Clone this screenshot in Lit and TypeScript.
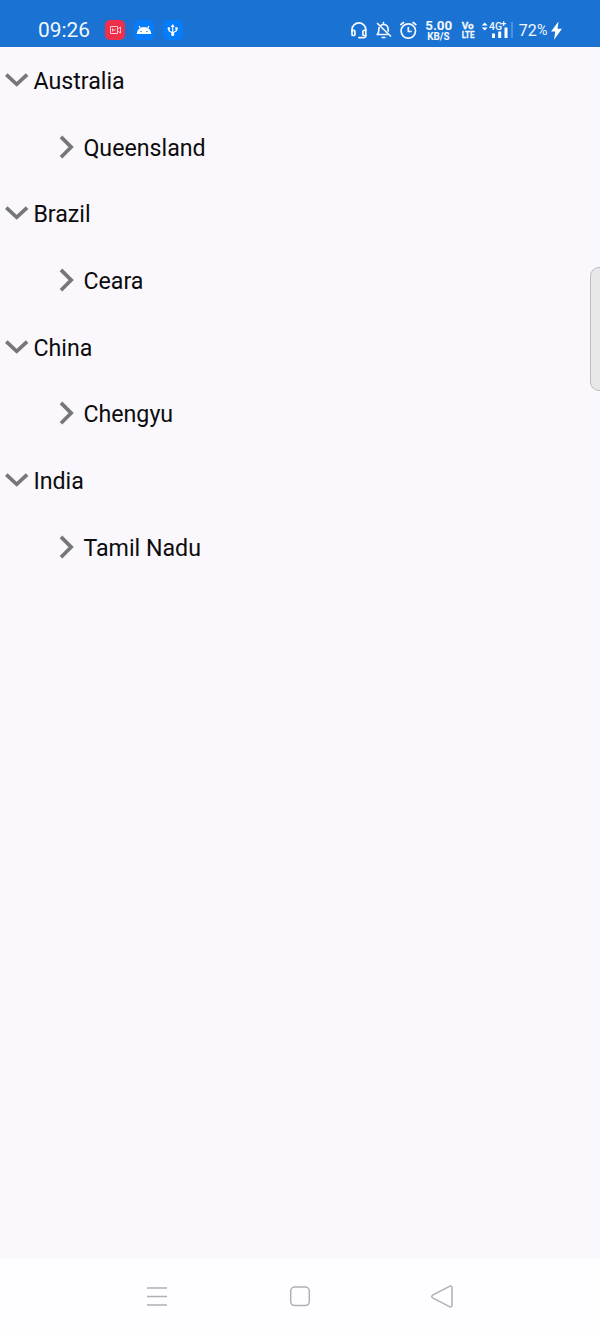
import { LitElement, html, css, svg } from "lit";
import { customElement, property } from "lit/decorators.js";

const countries = [
  { name: "Australia", region: "Queensland" },
  { name: "Brazil", region: "Ceara" },
  { name: "China", region: "Chengyu" },
  { name: "India", region: "Tamil Nadu" },
];

@customElement("status-bar")
class StatusBar extends LitElement {
  static styles = css`
    :host {
      display: flex;
      flex: none;
      justify-content: space-between;
      height: 46.5px;
      background: #1a73d3;
      font-family: Roboto, sans-serif;
    }
    svg { display: block; height: 46px; flex: none; }
    .group { display: flex; }
    .line { fill: none; stroke: #f4f8fd; stroke-width: 1.7; stroke-linecap: round; stroke-linejoin: round; }
    .thin { fill: none; stroke: #fff; stroke-width: 1.2; }
    .faint { fill: none; stroke: #ffc9d0; stroke-width: 1; }
    .fill { fill: #fff; }
    .clock { font-size: 20.6px; fill: #f4f8fd; }
    .speed { font-size: 13px; font-weight: 700; fill: #f4f8fd; }
    .unit { font-size: 10.2px; font-weight: 700; fill: #f4f8fd; }
    .volte { font-size: 9.8px; font-weight: 700; fill: #f4f8fd; stroke: #f4f8fd; stroke-width: 0.3; }
    .net { font-size: 11.6px; font-weight: 500; fill: #f4f8fd; }
    .pct { font-size: 16px; fill: #f4f8fd; }
    .sign { font-size: 14px; fill: #f4f8fd; }
    .red { fill: #f0304a; }
    .blue { fill: #057dfb; }
    .divider { fill: #4b92df; }
  `;

  render() {
    return html`
      <div class="group">
        <svg width="98" viewBox="0 0 98 46">
          <text class="clock" x="38" y="37.3" textLength="52" lengthAdjust="spacingAndGlyphs">09:26</text>
        </svg>
        <svg width="30" viewBox="98 0 30 46">
          <rect class="red" x="105" y="20" width="20" height="20" rx="5" />
          <path class="faint" d="M110.500 26.500h7v7h-7zM117.500 29l3-2v6l-3-2M112.500 28.500v3M112.500 30h3" />
        </svg>
        <svg width="30" viewBox="128 0 30 46">
          <rect class="blue" x="134" y="20" width="20" height="20" rx="5" />
          <path class="fill" d="M136.700 34a7.300 7 0 0 1 14.600 0z" />
          <path class="thin" d="M140.500 28.500l-1.500-2.500M147.500 28.500l1.500-2.500" />
          <circle class="blue" cx="141" cy="31.500" r=".7" />
          <circle class="blue" cx="147" cy="31.500" r=".7" />
        </svg>
        <svg width="30" viewBox="158 0 30 46">
          <rect class="blue" x="163" y="20" width="20" height="20" rx="5" />
          <path class="thin" d="M172.700 26v8M168.900 28.500v2.200l3.800 2.300 3.800-2.300v-2.200" />
          <path class="fill" d="M170.700 27l2-3 2 3zM175.300 27.300h2.400v2.400h-2.400z" />
          <circle class="fill" cx="168.900" cy="28.500" r="1.300" />
          <circle class="fill" cx="172.700" cy="34.400" r="1.600" />
        </svg>
      </div>
      <div class="group">
        <svg width="23" viewBox="349 0 23 46">
          <path class="line" d="M352 31.500v-2a6.900 6.700 0 0 1 13.800 0v6.500q0 1.600-1.600 1.600h-5.300" />
          <path class="line" d="M352 30.300h1.700q1.200 0 1.200 1.200v3q0 1-1.200 1h-.7q-1 0-1-1zM365.800 30.300h-1.700q-1.200 0-1.200 1.200v3q0 1 1.200 1h1.700" />
        </svg>
        <svg width="25" viewBox="372 0 25 46">
          <path class="line" d="M381 25.300q1-.8 2.500-.8 4.500 0 4.700 5v1.500M379.200 27.700q-.5 1-.5 3.300 0 1.700-1.500 3.500h9.800M383.500 24v-1.500M377.500 23.500l13 12.500M382.300 37.500h2.600" />
        </svg>
        <svg width="25" viewBox="397 0 25 46">
          <circle class="line" cx="408.300" cy="31" r="7.200" />
          <path class="line" d="M408.300 27.500v4h2.700M400.800 24.600l2.700-2.100M415.900 24.600l-2.700-2.100" />
        </svg>
        <svg width="35" viewBox="422 0 35 46">
          <text class="speed" x="425.200" y="30.200" textLength="27" lengthAdjust="spacingAndGlyphs">5.00</text>
          <text class="unit" x="427.300" y="39.700" textLength="22.300" lengthAdjust="spacingAndGlyphs">KB/S</text>
        </svg>
        <svg width="22" viewBox="457 0 22 46">
          <text class="volte" x="461.700" y="29.300" textLength="12" lengthAdjust="spacingAndGlyphs">Vo</text>
          <text class="volte" x="461.700" y="38.300" textLength="12.800" lengthAdjust="spacingAndGlyphs">LTE</text>
        </svg>
        <svg width="37" viewBox="479 0 37 46">
          <path class="fill" d="M481.800 25.600l2.900-3.200 2.900 3.200zM481.800 27.400l2.900 3.200 2.900-3.200z" />
          <text class="net" x="489" y="30.200" textLength="13" lengthAdjust="spacingAndGlyphs">4G</text>
          <path class="thin" d="M503.700 21.300v4.600M501.400 23.600h4.600" />
          <path class="fill" d="M492 33.500h3v4.500h-3zM498.200 31.500h3v6.500h-3zM504.500 27.500h3v10.500h-3z" />
          <rect class="divider" x="511" y="22" width="2" height="16" />
        </svg>
        <svg width="33" viewBox="516 0 33 46">
          <text class="pct" x="518.700" y="36" textLength="18" lengthAdjust="spacingAndGlyphs">72</text>
          <text class="sign" x="537" y="35.300" textLength="10.500" lengthAdjust="spacingAndGlyphs">%</text>
        </svg>
        <svg width="51" viewBox="549 0 51 46">
          <path class="fill" d="M558.500 21.500l-7.500 10h4.300l-1.300 8.200 8-11h-4.500z" />
        </svg>
      </div>
    `;
  }
}

@customElement("tree-row")
class TreeRow extends LitElement {
  @property() label = "";
  @property({ type: Boolean }) child = false;

  static styles = css`
    :host { display: block; height: 66.667px; }
    .row {
      display: flex;
      align-items: center;
      height: 100%;
      font: 23.2px/28px Roboto, sans-serif;
      color: #0c0c0e;
    }
    .nested { padding-left: 50px; }
    .icon { width: 33.400px; height: 34px; flex: none; fill: none; stroke: #777679; stroke-width: 3.700; }
    .label { padding-top: 2px; }
  `;

  render() {
    return html`
      <div class="row ${this.child ? "nested" : ""}">
        <svg class="icon" viewBox="0 0 33.400 34">
          ${this.child
            ? svg`<path d="M11 6.900L21.200 17.100L11 27.300" />`
            : svg`<path d="M6.300 11.700L16.700 21.300L27.100 11.700" />`}
        </svg>
        <span class="label">${this.label}</span>
      </div>
    `;
  }
}

@customElement("nav-bar")
class NavBar extends LitElement {
  static styles = css`
    :host {
      display: grid;
      grid-template-columns: 144px 143px 141px;
      justify-content: center;
      justify-items: center;
      align-items: center;
      height: 74px;
      padding-right: 3px;
      flex: none;
      box-sizing: border-box;
      background: #fefdff;
    }
    svg { width: 26px; height: 26px; fill: none; stroke: #b0afb2; stroke-width: 1.500; stroke-linejoin: round; }
  `;

  render() {
    return html`
      <svg viewBox="0 0 26 26"><path d="M3 5h20M3 13.500h20M3 22h20" /></svg>
      <svg viewBox="0 0 26 26"><rect x="3.700" y="4" width="18.600" height="18.600" rx="4" /></svg>
      <svg viewBox="0 0 26 26"><path d="M3.500 12.200L20.500 3.300Q23 2.500 23 4.800V22.200Q23 24.500 20.500 23.700L3.500 14.800Q2 13.500 3.500 12.200z" /></svg>
    `;
  }
}

@customElement("app-root")
class AppRoot extends LitElement {
  static styles = css`
    :host {
      display: flex;
      flex-direction: column;
      position: relative;
      height: 1333px;
      overflow: hidden;
      background: #faf8fc;
    }
    .tree { flex: 1; padding-top: 0.2px; }
    .handle {
      position: absolute;
      right: -10px;
      top: 266.5px;
      width: 20px;
      height: 124px;
      box-sizing: border-box;
      border: 1px solid #bdbcbe;
      border-radius: 9px;
      background: #e8e7e9;
    }
  `;

  render() {
    return html`
      <status-bar></status-bar>
      <div class="tree">
        ${countries.map(
          (c) => html`
            <tree-row .label=${c.name}></tree-row>
            <tree-row .label=${c.region} child></tree-row>
          `
        )}
      </div>
      <nav-bar></nav-bar>
      <div class="handle"></div>
    `;
  }
}
